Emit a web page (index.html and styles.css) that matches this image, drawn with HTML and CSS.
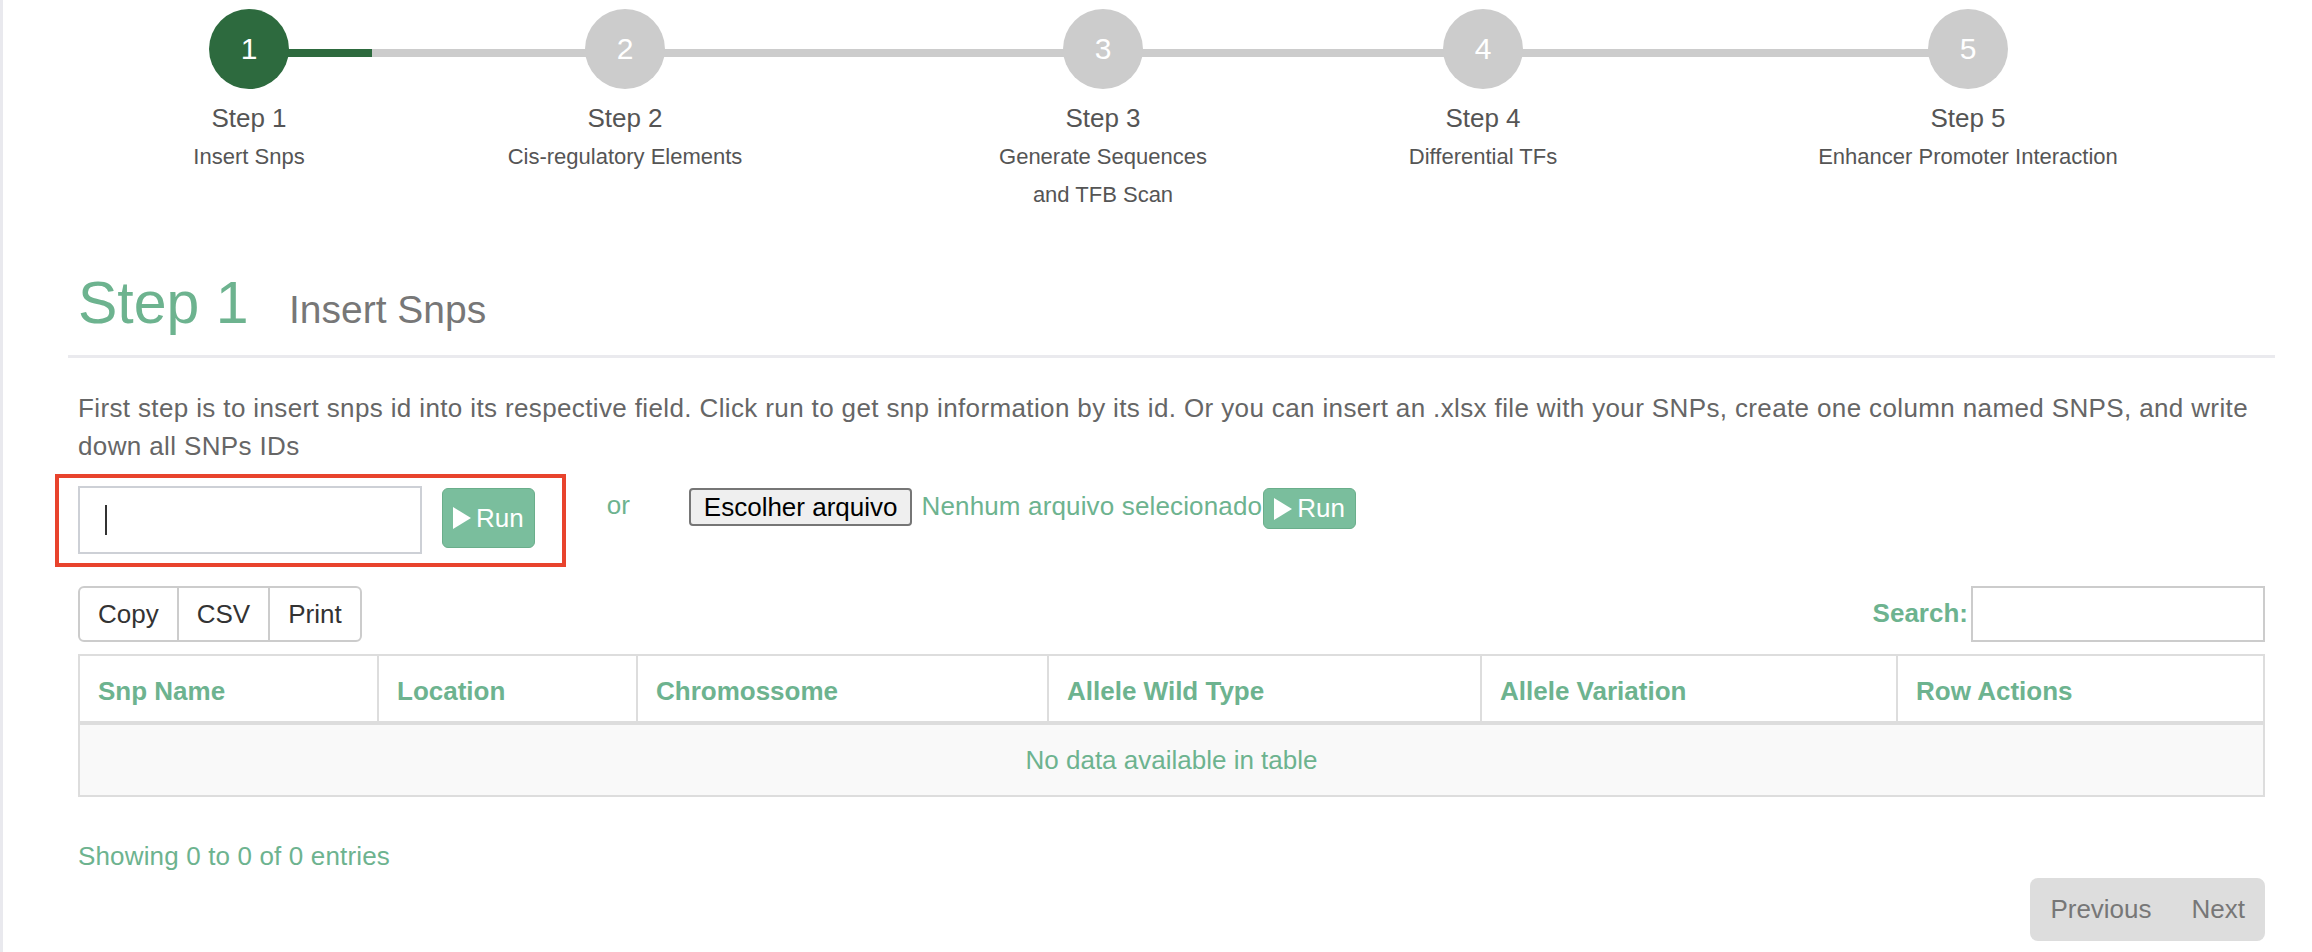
FILE: index.html
```html
<!DOCTYPE html>
<html lang="en">
<head>
<meta charset="utf-8">
<title>Step 1 - Insert Snps</title>
<link rel="stylesheet" href="styles.css">
</head>
<body>
<div class="page">
  <div class="stepper">
    <div class="track"><div class="track-fill"></div></div>
    <div class="step">
      <div class="step-circle active">1</div>
      <div class="step-title">Step 1</div>
      <div class="step-desc">Insert Snps</div>
    </div>
    <div class="step">
      <div class="step-circle">2</div>
      <div class="step-title">Step 2</div>
      <div class="step-desc">Cis-regulatory Elements</div>
    </div>
    <div class="step">
      <div class="step-circle">3</div>
      <div class="step-title">Step 3</div>
      <div class="step-desc">Generate Sequences<br>and TFB Scan</div>
    </div>
    <div class="step">
      <div class="step-circle">4</div>
      <div class="step-title">Step 4</div>
      <div class="step-desc">Differential TFs</div>
    </div>
    <div class="step">
      <div class="step-circle">5</div>
      <div class="step-title">Step 5</div>
      <div class="step-desc">Enhancer Promoter Interaction</div>
    </div>
  </div>

  <div class="content">
    <div class="page-header">
      <h1 class="title">Step 1 <small class="subtitle">Insert Snps</small></h1>
    </div>
    <div class="section">
      <p class="intro">First step is to insert snps id into its respective field. Click run to get snp information by its id. Or you can insert an .xlsx file with your SNPs, create one column named SNPS, and write down all SNPs IDs</p>

      <div class="actions">
        <div class="highlight">
          <div class="fake-input"><span class="caret"></span></div>
          <button class="run-btn" type="button"><svg class="play" width="18" height="22" viewBox="0 0 18 22"><polygon points="0,0 18,11 0,22" fill="#fff"/></svg><span>Run</span></button>
        </div>
        <span class="or">or</span>
        <div class="file-group">
          <button class="file-btn" type="button">Escolher arquivo</button>
          <span class="file-label">Nenhum arquivo selecionado</span>
          <button class="run-btn run-sm" type="button"><svg class="play" width="18" height="22" viewBox="0 0 18 22"><polygon points="0,0 18,11 0,22" fill="#fff"/></svg><span>Run</span></button>
        </div>
      </div>

      <div class="dt-top">
        <div class="btn-group">
          <span class="dt-btn">Copy</span>
          <span class="dt-btn">CSV</span>
          <span class="dt-btn">Print</span>
        </div>
        <label class="search">Search:<span class="search-input"></span></label>
      </div>

      <table class="data-table">
        <colgroup>
          <col class="c1"><col class="c2"><col class="c3"><col class="c4"><col class="c5"><col class="c6">
        </colgroup>
        <thead>
          <tr>
            <th>Snp Name</th>
            <th>Location</th>
            <th>Chromossome</th>
            <th>Allele Wild Type</th>
            <th>Allele Variation</th>
            <th>Row Actions</th>
          </tr>
        </thead>
        <tbody>
          <tr><td colspan="6" class="empty">No data available in table</td></tr>
        </tbody>
      </table>

      <div class="dt-bottom">
        <div class="dt-info">Showing 0 to 0 of 0 entries</div>
        <div class="dt-pagination">
          <span class="page-link">Previous</span>
          <span class="page-link">Next</span>
        </div>
      </div>
    </div>
  </div>
</div>
</body>
</html>
```

FILE: styles.css
```css
* { box-sizing: border-box; }
html, body { margin: 0; padding: 0; background: #fff; }
body {
  font-family: "Liberation Sans", Arial, Helvetica, sans-serif;
  font-size: 26px;
  line-height: 37.5px;
  color: #666;
}
.page {
  border-left: 3px solid #e9e9ee;
  min-height: 952px;
}

/* stepper */
.stepper {
  position: relative;
  display: grid;
  grid-template-columns: 200px 552px 404px 356px 614px;
  margin-left: 146px;
  padding-top: 9px;
}
.track {
  position: absolute;
  top: 49px;
  left: 100px;
  width: 1719px;
  height: 8px;
  background: #cccccc;
}
.track-fill {
  width: 123px;
  height: 100%;
  background: #2d6a3e;
}
.step {
  position: relative;
  display: flex;
  flex-direction: column;
  align-items: center;
  text-align: center;
}
.step-circle {
  width: 80px;
  height: 80px;
  border-radius: 50%;
  background: #cccccc;
  color: #fff;
  font-size: 30px;
  display: flex;
  align-items: center;
  justify-content: center;
}
.step-circle.active { background: #2d6a3e; }
.step-title {
  margin-top: 14px;
  font-size: 26px;
  line-height: 30px;
  color: #555;
}
.step-desc {
  margin-top: 5px;
  font-size: 22px;
  line-height: 38px;
  color: #555;
}

/* content */
.content { margin: 0 37px 0 65px; }
.page-header {
  margin-top: 55px;
  padding: 0 10px 18px;
  border-bottom: 3px solid #eaeaee;
}
.title {
  margin: 0;
  font-size: 59px;
  line-height: 68px;
  font-weight: normal;
  color: #6db38f;
}
.subtitle {
  font-size: 39px;
  line-height: 1;
  color: #777;
  margin-left: 24px;
}
.section { padding: 0 10px; }
.intro {
  margin: 32px 0 0;
  color: #666;
  letter-spacing: 0.37px;
}

.actions {
  display: flex;
  align-items: flex-start;
  margin-top: 9px;
}
.highlight {
  display: flex;
  align-items: center;
  border: 4px solid #e8432d;
  margin-left: -23px;
  padding: 8px 27px 9px 19px;
}
.fake-input {
  width: 344px;
  height: 68px;
  border: 2px solid #cdd0d6;
  padding-left: 25px;
  display: flex;
  align-items: center;
}
.caret {
  width: 2px;
  height: 30px;
  background: #333;
}
.run-btn {
  display: flex;
  align-items: center;
  gap: 5px;
  margin-left: 20px;
  margin-top: -4px;
  padding: 12px 10px;
  border: 1px solid #6aae8b;
  border-radius: 6px;
  background: #7abe9d;
  color: #fff;
  font-family: inherit;
  font-size: 26px;
  line-height: 34px;
}
.play { display: block; }
.or {
  margin: 13px 0 0 41px;
  color: #6db38f;
}
.file-group {
  display: flex;
  align-items: flex-start;
  margin: 14px 0 0 59px;
}
.file-btn {
  height: 38px;
  border: 2px solid #767676;
  background: #efefef;
  border-radius: 4px;
  color: #000;
  padding: 0 13px;
  font-family: inherit;
  font-size: 26px;
  line-height: 34px;
}
.file-label {
  margin-left: 9px;
  color: #6db38f;
  letter-spacing: 0.15px;
}
.run-btn.run-sm {
  margin: 0 0 0 1px;
  padding: 2px 10px;
  line-height: 35px;
}

/* datatable controls */
.dt-top {
  display: flex;
  justify-content: space-between;
  align-items: center;
  margin-top: 19px;
}
.btn-group {
  display: flex;
  border: 2px solid #cccccc;
  border-radius: 6px;
}
.dt-btn {
  padding: 8px 18px;
  line-height: 36px;
  color: #333;
}
.dt-btn + .dt-btn { border-left: 2px solid #cccccc; }
.search {
  display: flex;
  align-items: center;
  font-weight: bold;
  color: #6db38f;
}
.search-input {
  width: 294px;
  height: 56px;
  margin-left: 3px;
  border: 2px solid #cccccc;
}

.data-table {
  width: 100%;
  margin-top: 12px;
  border-collapse: separate;
  border-spacing: 0;
  border: 2px solid #dddddd;
  table-layout: fixed;
}
.c1 { width: 299px; }
.c2 { width: 259px; }
.c3 { width: 411px; }
.c4 { width: 433px; }
.c5 { width: 416px; }
.data-table th {
  padding: 19px 18px 13px;
  line-height: 33px;
  text-align: left;
  font-weight: bold;
  color: #6db38f;
  border-right: 2px solid #dddddd;
  border-bottom: 4px solid #dddddd;
}
.data-table th:last-child { border-right: none; }
.data-table td {
  padding: 17px;
  line-height: 36px;
  background: #f9f9f9;
}
.data-table td.empty {
  text-align: center;
  color: #6db38f;
}

.dt-bottom {
  display: flex;
  flex-direction: column;
  align-items: stretch;
}
.dt-info {
  margin-top: 41px;
  color: #6db38f;
  letter-spacing: 0.15px;
}
.dt-pagination {
  align-self: flex-end;
  display: flex;
  margin-top: 2px;
  background: #dddddd;
  border-radius: 8px;
  padding: 13px 0;
}
.page-link {
  padding: 0 20px;
  color: #777;
}
```
